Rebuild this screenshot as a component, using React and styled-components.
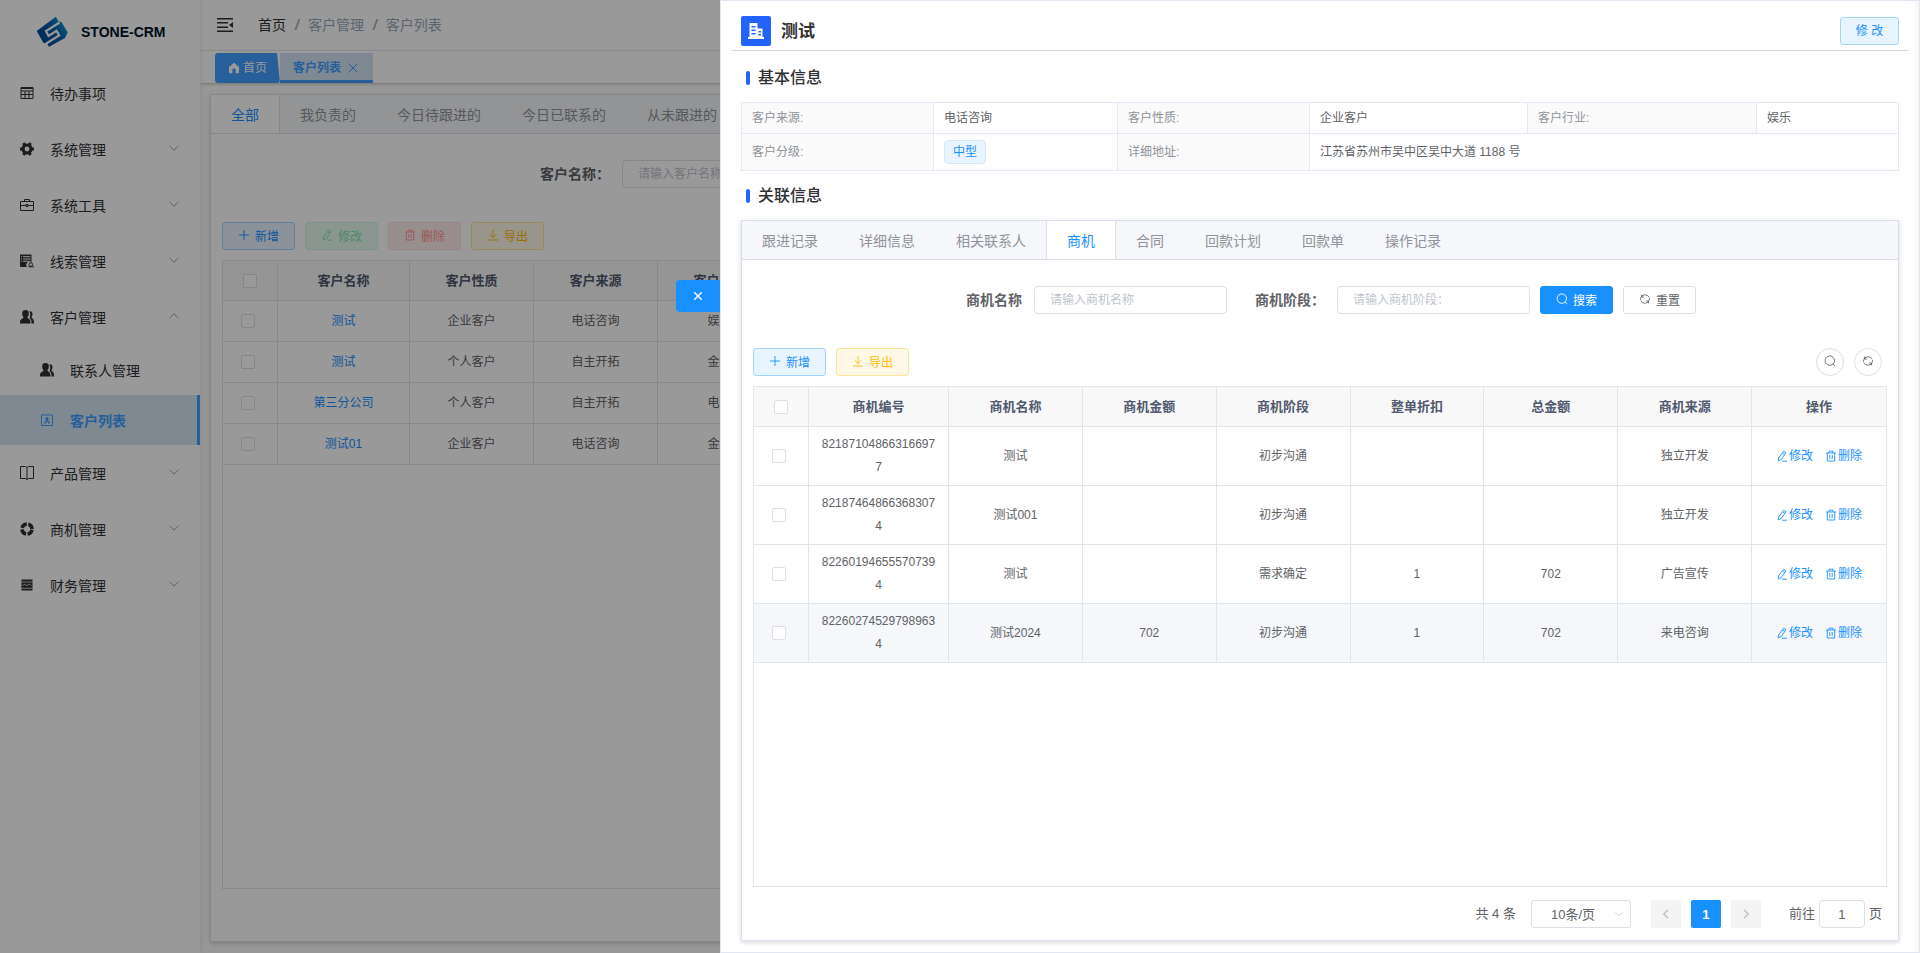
import styled, { createGlobalStyle } from "styled-components";

const GlobalStyle = createGlobalStyle`
  * {
    box-sizing: border-box;
  }
  body {
    margin: 0;
    background: #fff;
    color: #303133;
    font-family: "Liberation Sans", "Noto Sans CJK SC", sans-serif;
    font-size: 14px;
    line-height: 20px;
  }
  button, input, select {
    font-family: inherit;
    margin: 0;
  }
  a {
    color: inherit;
    text-decoration: none;
  }
`;

/* ---------- icons ---------- */

const Svg = styled.svg`
  display: block;
  flex: none;
  width: ${(p) => p.$size || 12}px;
  height: ${(p) => p.$size || 12}px;
  fill: none;
  stroke: currentColor;
  stroke-width: ${(p) => p.$stroke || 0.9};
`;

const PlusIcon = () => (
  <Svg viewBox="0 0 12 12">
    <path d="M6 1v10M1 6h10" />
  </Svg>
);

const EditIcon = () => (
  <Svg viewBox="0 0 12 12">
    <path d="M7.6 1.2 10 2.7 5.2 9.6 2.2 10.9 2.5 8zM6.5 2.8 8.9 4.4M6 11.2h5" />
  </Svg>
);

const TrashIcon = () => (
  <Svg viewBox="0 0 12 12">
    <path d="M1 3h10M4 3V1.2h4V3M2.3 3v8h7.4V3M4.8 5v4M7.2 5v4" />
  </Svg>
);

const DownloadIcon = () => (
  <Svg viewBox="0 0 12 12">
    <path d="M6 1v7.5M2.8 5.5 6 8.6l3.2-3.1M1 11h10" />
  </Svg>
);

const SearchIcon = () => (
  <Svg viewBox="0 0 12 12">
    <circle cx="5.8" cy="5.6" r="4.7" />
    <path d="m9.2 9 2 2.2" />
  </Svg>
);

const RefreshIcon = () => (
  <Svg viewBox="0 0 12 12">
    <path d="M1.6 7.2V5.4A4 4 0 0 1 5.2 1.900h1.500A4 4 0 0 1 10 4M10.400 4.800v1.800a4 4 0 0 1-3.600 3.500H5.300A4 4 0 0 1 2 8M2.300 1.700l.5 2.300h2M9.700 10.300 9.200 8h-2" />
  </Svg>
);

const CloseIcon = ({ size = 12, stroke = 1 }) => (
  <Svg viewBox="0 0 12 12" $size={size} $stroke={stroke}>
    <path d="m1.5 1.5 9 9M10.5 1.5l-9 9" />
  </Svg>
);

const Chevron = ({ up, size = 12 }) => (
  <Svg viewBox="0 0 12 12" $size={size}>
    <path d={up ? "M1.5 8.2 6 3.8l4.5 4.4" : "M1.5 3.8 6 8.2l4.5-4.4"} />
  </Svg>
);

const SideChevron = ({ right }) => (
  <Svg viewBox="0 0 12 12" $stroke={1.6}>
    <path d={right ? "M4 1.8 8.2 6 4 10.2" : "M8 1.8 3.8 6 8 10.2"} />
  </Svg>
);

const HomeIcon = () => (
  <Svg viewBox="0 0 12 12">
    <path
      fill="currentColor"
      stroke="none"
      d="M6 .8 11 5v6.2H7.6V7.8a1.6 1.6 0 0 0-3.2 0v3.400H1V5z"
    />
  </Svg>
);

const FoldIcon = () => (
  <Svg viewBox="0 0 16 16" $size={16}>
    <path strokeWidth="1.4" d="M0 1.7h16M0 5.7h11M0 10.300h11M0 14.300h16" />
    <path fill="currentColor" stroke="none" d="M16 5v6l-4-3z" />
  </Svg>
);

const BuildingIcon = () => (
  <Svg viewBox="0 0 16 16" $size={16}>
    <path
      fill="currentColor"
      stroke="none"
      fillRule="evenodd"
      d="M1.5 0h8v5.5h5V14H16v2H0v-2h1.5zM3.5 3v1.5h4V3zm0 3.5V8h4V6.5zm0 3.5v1.5h4V10zm7-2v1.5H13V8zm0 3v1.5H13V11z"
    />
  </Svg>
);

const Logo = () => (
  <Svg viewBox="0 0 32 32" $size={32}>
    <defs>
      <linearGradient id="logoFill" x1="0" y1="1" x2="1" y2="0.2">
        <stop offset="0" stopColor="#003c90" />
        <stop offset="0.6" stopColor="#0a5cab" />
        <stop offset="1" stopColor="#12a0d6" />
      </linearGradient>
    </defs>
    <path
      fill="url(#logoFill)"
      stroke="none"
      d="M.7 15 19.800.7 22.500 5.500 25.500 6 31.700 16.500 29 22 13 30.800 10.800 27.200 7.500 27z"
    />
    <path stroke="#fff" strokeWidth="2.200" d="m23.500 6.500-13.500 8.700 2.600 4.800 7.900-5.200 2.700 4.700-13.700 8.500" />
  </Svg>
);

const menuPaths = {
  table: <path d="M1 1.500h12v11H1zM1 2.500h12M1 5h12M1 8.500h12M5 5v7.500M9 5v7.500" />,
  gear: (
    <>
      <circle cx="7" cy="7" r="4" strokeWidth="3.200" />
      <path
        strokeWidth="3"
        d="M3.500.9 4.800 3.200M10.500.9 9.200 3.200M0 7h2.500M11.500 7H14M3.500 13.100l1.300-2.300M10.500 13.100l-1.300-2.300"
      />
    </>
  ),
  briefcase: <path d="M.5 3.500h13v9H.5zM4.500 3.500v-2h5v2M.5 7.500H6M8 7.500h5.500M6 6.500h2v2H6z" />,
  server: (
    <>
      <path fill="currentColor" stroke="none" d="M0 .5h11.500v8A3.200 3.200 0 0 0 7 13H1a1 1 0 0 1-1-1z" />
      <path stroke="#fff" d="M3 2.700h7.500M3 5h7.500M3 7.300h7.500M1 2.700h1M1 5h1M1 7.300h1" />
      <circle cx="10.800" cy="10.600" r="1.800" />
      <path d="M8.500 12.800H14" />
    </>
  ),
  users: (
    <>
      <path
        fill="currentColor"
        stroke="none"
        d="M5.500 0a3.300 3.300 0 0 1 3.300 3.500c0 1.600-.7 2.900-1.400 3.600 0 .9.500 1.300 1.500 1.800 1.300.6 1.600 1.800 1.600 4.600H0c0-2.800.3-4 1.800-4.600 1.200-.5 1.700-.9 1.700-1.800-.8-.7-1.300-2-1.300-3.600A3.300 3.300 0 0 1 5.500 0z"
      />
      <path
        fill="currentColor"
        stroke="none"
        d="M9.500 1.200c1.800-.3 3 1 3 2.900 0 1.400-.5 2.400-1 3 0 .8.400 1.200 1.200 1.700 1 .6 1.300 1.700 1.300 4.700h-2.500c0-3-.4-4.400-2-5.200.7-1.200 1.300-3.800 0-7.100z"
      />
    </>
  ),
  badge: (
    <>
      <path d="M3 2H1.500v10.500h11V2H11M5 2h1M8 2h1M4 .8v2M7 .8v2M10 .8v2" />
      <circle cx="7" cy="5.800" r="1.200" fill="currentColor" />
      <path strokeWidth="1.400" d="M4.500 10.500 7 7.200l2.500 3.300" />
    </>
  ),
  book: (
    <>
      <path d="M5.500.5h-5v12h5M8.500.5h5v12h-5M5.500.5 7 1.500 8.500.5M5.500 12.500l1.500 1 1.500-1" />
      <path strokeOpacity="0.6" strokeWidth="1.600" d="M7 1.500v12" />
    </>
  ),
  ring: (
    <circle
      cx="7"
      cy="7"
      r="5"
      strokeWidth="3.600"
      strokeDasharray="6.250 1.600"
      strokeDashoffset="-0.800"
    />
  ),
  chart: (
    <>
      <path fill="currentColor" stroke="none" d="M1.500 1.500h11v11h-11z" />
      <path stroke="#fff" strokeWidth="0.700" d="M1.500 4h11M1.500 10.300h11M2.500 7.500 5 6l2 2 2-2 2.500 1.500" />
    </>
  ),
};

const MenuIcon = ({ name }) => (
  <Svg viewBox="0 0 14 14" $size={14} $stroke={1}>
    {menuPaths[name]}
  </Svg>
);

/* ---------- sidebar ---------- */

const Shell = styled.div`
  display: flex;
  height: 100vh;
  min-height: 700px;
  overflow: hidden;
`;

const Sidebar = styled.aside`
  flex: none;
  width: 200px;
  background: #fff;
  box-shadow: 0 0 6px rgba(60, 80, 140, 0.14);
  z-index: 1;
`;

const Brand = styled.h1`
  display: flex;
  align-items: center;
  gap: 13px;
  height: 65px;
  margin: 0;
  padding: 0 0 2px 36px;
  color: #001529;
  font-size: 14px;
  font-weight: 700;
`;

const MenuLink = styled.a`
  display: flex;
  align-items: center;
  height: ${(p) => (p.$sub ? 50 : 56)}px;
  padding: 0 17px 0 ${(p) => (p.$sub ? 40 : 20)}px;
  gap: 16px;
  color: ${(p) => (p.$active ? "#409eff" : "#303133")};
  font-weight: ${(p) => (p.$active ? 700 : 400)};
  background: ${(p) => (p.$active ? "#d3e4f3" : "transparent")};
  border-right: 3px solid ${(p) => (p.$active ? "#409eff" : "transparent")};

  > span {
    flex: 1;
    padding-top: 2px;
  }
  > span + svg {
    color: #909399;
    margin-bottom: 2px;
  }
`;

const menu = [
  { icon: "table", label: "待办事项" },
  { icon: "gear", label: "系统管理", arrow: "down" },
  { icon: "briefcase", label: "系统工具", arrow: "down" },
  { icon: "server", label: "线索管理", arrow: "down" },
  { icon: "users", label: "客户管理", arrow: "up" },
  { icon: "users", label: "联系人管理", sub: true },
  { icon: "badge", label: "客户列表", sub: true, active: true },
  { icon: "book", label: "产品管理", arrow: "down" },
  { icon: "ring", label: "商机管理", arrow: "down" },
  { icon: "chart", label: "财务管理", arrow: "down" },
];

/* ---------- top bars ---------- */

const Main = styled.main`
  display: flex;
  flex: 1;
  flex-direction: column;
  min-width: 0;
  background: #fcfcfd;
`;

const Navbar = styled.header`
  display: flex;
  align-items: center;
  flex: none;
  gap: 25px;
  height: 51px;
  padding-left: 17px;
  background: #fff;
  border-bottom: 1px solid #f0f0f4;
`;

const Breadcrumb = styled.nav`
  display: flex;
  color: #97a8be;

  a {
    color: #303133;
  }
  i {
    margin: 0 9px;
    color: #a8abb2;
    font-weight: 700;
  }
`;

const TagBar = styled.div`
  display: flex;
  align-items: flex-end;
  flex: none;
  height: 32px;
  padding-left: 15px;
  background: #fff;
  box-shadow: 0 1px 3px rgba(0, 0, 0, 0.24);
`;

const TagLink = styled.a`
  display: flex;
  align-items: center;
  gap: 3px;
  height: 30px;
  padding: 0 13px;
  font-size: 12px;
  color: #fff;
  background: #409eff;
  border-radius: 3px;
  clip-path: polygon(0 0, calc(100% - 3px) 0, 100% 100%, 0 100%);
`;

const ActiveTag = styled.div`
  display: flex;
  align-items: center;
  gap: 6px;
  height: 30px;
  padding: 2px 14px 0 13px;
  font-size: 12px;
  font-weight: 700;
  color: #409eff;
  background: #d3e4f6;
  border-bottom: 3px solid #409eff;
`;

const PlainButton = styled.button`
  display: flex;
  padding: 0;
  color: inherit;
  background: none;
  border: 0;
`;

/* ---------- shared panel ---------- */

const Panel = styled.section`
  display: flex;
  flex: 1;
  flex-direction: column;
  min-height: 0;
  background: #fff;
  border: 1px solid #d9dfec;
  box-shadow: 0 2px 4px rgba(0, 0, 0, 0.12), 0 0 6px rgba(0, 0, 0, 0.04);
`;

const PagePanel = styled(Panel)`
  margin: 11px 10px;
`;

const TabList = styled.div`
  display: flex;
  flex: none;
  height: 39px;
  overflow: hidden;
  background: #f5f7fa;
  border-bottom: 1px solid #dcdfe6;
`;

const Tab = styled.button`
  flex: none;
  height: 39px;
  margin-left: -1px;
  padding: 0 20px 2px;
  font-size: 14px;
  color: ${(p) => (p.$active ? "#1890ff" : "#909399")};
  background: ${(p) => (p.$active ? "#fff" : "transparent")};
  border: solid ${(p) => (p.$active ? "#dcdfe6" : "transparent")};
  border-width: 0 1px;
`;

const PanelBody = styled.div`
  display: flex;
  flex: 1;
  flex-direction: column;
  min-height: 0;
  padding: 26px 11px 12px;
`;

const SearchForm = styled.form`
  display: flex;
  flex: none;
  align-items: center;
  justify-content: ${(p) => (p.$start ? "flex-start" : "center")};
  margin-bottom: 34px;
  padding-left: ${(p) => (p.$start ? 318 : 22)}px;
`;

const Field = styled.label`
  display: flex;
  align-items: center;
  gap: 12px;
  margin-right: ${(p) => p.$gap || 0}px;
  color: #606266;
  font-weight: 700;
`;

const TextInput = styled.input`
  width: 193px;
  height: 28px;
  padding: 0 15px;
  color: #606266;
  font-size: 12px;
  background: #fff;
  border: 1px solid #dcdfe6;
  border-radius: 4px;
  outline: 0;

  &::placeholder {
    color: #c0c4cc;
  }
`;

const FormButtons = styled.div`
  display: flex;
  gap: 10px;
`;

const tones = {
  primary: ["#fff", "#1890ff", "#1890ff"],
  default: ["#606266", "#fff", "#dcdfe6"],
  blue: ["#1890ff", "#e8f4ff", "#a3d3ff"],
  green: ["#7be5ac", "#e7faf0", "#d0f5e0"],
  red: ["#ff9292", "#ffeded", "#ffdbdb"],
  yellow: ["#ffba00", "#fff8e6", "#ffe399"],
};

const Button = styled.button`
  display: inline-flex;
  align-items: center;
  justify-content: center;
  gap: 5px;
  width: ${(p) => p.$width || 73}px;
  height: 28px;
  padding: 0 0 2px;
  font-size: 12px;
  color: ${(p) => tones[p.$tone][0]};
  background: ${(p) => tones[p.$tone][1]};
  border: 1px solid ${(p) => tones[p.$tone][2]};
  border-radius: ${(p) => (p.$round ? 14 : 3)}px;
`;

const Toolbar = styled.div`
  display: flex;
  flex: none;
  gap: 10px;
  margin-bottom: 10px;
`;

const Spacer = styled.div`
  flex: 1;
`;

const RoundTools = styled.div`
  display: flex;
  gap: 10px;
  padding-right: 5px;
`;

const TableBox = styled.div`
  flex: 1;
  min-height: 0;
  overflow: hidden;
  margin-bottom: ${(p) => p.$bottom || 0}px;
  border: 1px solid #dfe6ec;
`;

const Table = styled.table`
  width: ${(p) => (p.$fill ? "100%" : "559px")};
  table-layout: fixed;
  border-collapse: separate;
  border-spacing: 0;

  th,
  td {
    padding: 0 10px;
    text-align: center;
    border: solid #dfe6ec;
    border-width: 0 1px 1px 0;
  }
  tr > :last-child {
    border-right-width: ${(p) => (p.$fill ? 0 : 1)}px;
  }
  th {
    height: 40px;
    color: #515a6e;
    background: #f8f8f9;
    font-size: 13px;
    font-weight: 700;
  }
  td {
    height: ${(p) => p.$row}px;
    color: #606266;
    font-size: 12px;
    line-height: 23px;
    word-break: break-all;
  }
  td:first-child {
    padding: 0 14px 0 10px;
  }
`;

const Row = styled.tr`
  background: ${(p) => (p.$hover ? "#f5f7fa" : "#fff")};
`;

const Check = styled.input.attrs({ type: "checkbox" })`
  display: block;
  width: 14px;
  height: 14px;
  margin: 0 auto;
  appearance: none;
  background: #fff;
  border: 1px solid #dcdfe6;
  border-radius: 2px;
`;

const NameLink = styled.a`
  color: #1890ff;
`;

const RowActions = styled.div`
  display: flex;
  justify-content: center;
  gap: 12px;
  color: #1890ff;
`;

const TextButton = styled(PlainButton)`
  align-items: center;
  gap: 1px;
  font-size: 12px;
  line-height: 20px;
`;

/* ---------- drawer ---------- */

const Mask = styled.div`
  position: fixed;
  inset: 0;
  z-index: 2;
  background: rgba(0, 0, 0, 0.4);
`;

const Drawer = styled.aside`
  position: fixed;
  top: 0;
  right: 0;
  bottom: 0;
  z-index: 3;
  display: flex;
  flex-direction: column;
  width: 62.5%;
  padding: 0 10px 11px;
  background: #fff;
  border: 1px solid #e2e6f3;
  box-shadow: inset -8px 0 8px -6px rgba(0, 0, 0, 0.05);
`;

const DrawerClose = styled.button`
  position: absolute;
  top: 279px;
  right: 100%;
  display: flex;
  align-items: center;
  justify-content: center;
  width: 44px;
  height: 32px;
  margin-right: 1px;
  padding: 0;
  color: #fff;
  background: #1890ff;
  border: 0;
  border-radius: 4px 0 0 4px;
`;

const DrawerHead = styled.header`
  display: flex;
  align-items: center;
  flex: none;
  gap: 10px;
  height: 50px;
  padding: 10px 10px 0;
  margin-bottom: 2px;
  border-bottom: 1px solid #d0d9e8;
`;

const HeadIcon = styled.span`
  display: flex;
  align-items: center;
  justify-content: center;
  width: 30px;
  height: 30px;
  color: #fff;
  background: #2362fb;
  border-radius: 2px;
`;

const HeadTitle = styled.h2`
  flex: 1;
  margin: 0;
  padding-top: 2px;
  color: #333;
  font-size: 17px;
  line-height: 24px;
`;

const DrawerBody = styled.div`
  display: flex;
  flex: 1;
  flex-direction: column;
  min-height: 0;
  padding: 0 10px;
`;

const SectionTitle = styled.h3`
  display: flex;
  align-items: center;
  flex: none;
  gap: 8px;
  margin: 0;
  padding: 13px 5px 12px;
  color: #303133;
  font-size: 16px;
  font-weight: 500;
  line-height: 24px;

  &::before {
    content: "";
    width: 4px;
    height: 14px;
    background: #2362fb;
    border-radius: 2px;
  }
`;

const Info = styled.table`
  flex: none;
  width: 100%;
  table-layout: fixed;
  border-collapse: collapse;
  font-size: 12px;

  th,
  td {
    height: 31px;
    padding: 0 10px;
    text-align: left;
    color: #606266;
    border: 1px solid #e6e8f5;
  }
  th {
    color: #909399;
    font-weight: 400;
    background: #fafafa;
  }
  tr:last-child > * {
    height: 37px;
  }
`;

const Level = styled.span`
  display: inline-block;
  padding: 0 8px;
  color: #1890ff;
  line-height: 22px;
  background: #e8f4ff;
  border: 1px solid #d1e9ff;
  border-radius: 4px;
`;

const Pager = styled.div`
  display: flex;
  align-items: center;
  justify-content: flex-end;
  flex: none;
  margin-top: 13px;
  padding-right: 5px;
  color: #606266;
  font-size: 13px;
`;

const SizeSelect = styled.div`
  display: grid;
  align-items: center;
  width: 100px;
  margin: 0 20px 0 15px;

  > * {
    grid-area: 1 / 1;
  }
  select {
    width: 100%;
    height: 28px;
    padding: 0 25px 0 19px;
    color: #606266;
    font-size: 13px;
    background: #fff;
    border: 1px solid #dcdfe6;
    border-radius: 3px;
    appearance: none;
  }
  svg {
    justify-self: end;
    margin-right: 7px;
    color: #c0c4cc;
    pointer-events: none;
  }
`;

const PageButtons = styled.div`
  display: flex;
  gap: 10px;
  margin-right: 28px;
`;

const PageButton = styled.button`
  display: flex;
  align-items: center;
  justify-content: center;
  width: 30px;
  height: 28px;
  padding: 0;
  font-size: 13px;
  font-weight: 700;
  color: ${(p) => (p.$active ? "#fff" : "#c0c4cc")};
  background: ${(p) => (p.$active ? "#1890ff" : "#f4f4f5")};
  border: 0;
  border-radius: 2px;
`;

const Jump = styled.label`
  display: flex;
  align-items: center;
  gap: 4px;

  input {
    width: 46px;
    height: 28px;
    padding: 0 3px;
    color: #606266;
    font-size: 13px;
    text-align: center;
    border: 1px solid #dcdfe6;
    border-radius: 4px;
  }
`;

const pageTabs = ["全部", "我负责的", "今日待跟进的", "今日已联系的", "从未跟进的"];

const customers = [
  ["测试", "企业客户", "电话咨询", "娱乐"],
  ["测试", "个人客户", "自主开拓", "金融"],
  ["第三分公司", "个人客户", "自主开拓", "电商"],
  ["测试01", "企业客户", "电话咨询", "金融"],
];

const drawerTabs = ["跟进记录", "详细信息", "相关联系人", "商机", "合同", "回款计划", "回款单", "操作记录"];

const chanceHeads = ["商机编号", "商机名称", "商机金额", "商机阶段", "整单折扣", "总金额", "商机来源", "操作"];

const chances = [
  ["821871048663166977", "测试", "", "初步沟通", "", "", "独立开发"],
  ["821874648663683074", "测试001", "", "初步沟通", "", "", "独立开发"],
  ["822601946555707394", "测试", "", "需求确定", "1", "702", "广告宣传"],
  ["822602745297989634", "测试2024", "702", "初步沟通", "1", "702", "来电咨询"],
];

const Tabs = ({ items, active }) => (
  <TabList>
    {items.map((t) => (
      <Tab key={t} $active={t === active}>
        {t}
      </Tab>
    ))}
  </TabList>
);

const CustomerPage = () => (
  <PagePanel>
    <Tabs items={pageTabs} active="全部" />
    <PanelBody>
      <SearchForm $start>
        <Field>
          客户名称：
          <TextInput placeholder="请输入客户名称" />
        </Field>
      </SearchForm>
      <Toolbar>
        <Button $tone="blue">
          <PlusIcon />
          新增
        </Button>
        <Button $tone="green" disabled>
          <EditIcon />
          修改
        </Button>
        <Button $tone="red" disabled>
          <TrashIcon />
          删除
        </Button>
        <Button $tone="yellow">
          <DownloadIcon />
          导出
        </Button>
      </Toolbar>
      <TableBox $bottom={40}>
        <Table $row={41}>
          <colgroup>
            <col width="55" />
            <col width="132" />
            <col width="124" />
            <col width="124" />
            <col width="124" />
          </colgroup>
          <thead>
            <tr>
              <th>
                <Check aria-label="全选" />
              </th>
              <th>客户名称</th>
              <th>客户性质</th>
              <th>客户来源</th>
              <th>客户行业</th>
            </tr>
          </thead>
          <tbody>
            {customers.map(([name, ...rest], i) => (
              <Row key={i}>
                <td>
                  <Check aria-label={name} />
                </td>
                <td>
                  <NameLink href="#">{name}</NameLink>
                </td>
                {rest.map((v, j) => (
                  <td key={j}>{v}</td>
                ))}
              </Row>
            ))}
          </tbody>
        </Table>
      </TableBox>
    </PanelBody>
  </PagePanel>
);

const ChancePanel = () => (
  <Panel>
    <Tabs items={drawerTabs} active="商机" />
    <PanelBody>
      <SearchForm>
        <Field $gap={28}>
          商机名称
          <TextInput placeholder="请输入商机名称" />
        </Field>
        <Field $gap={10}>
          商机阶段：
          <TextInput placeholder="请输入商机阶段：" />
        </Field>
        <FormButtons>
          <Button type="button" $tone="primary">
            <SearchIcon />
            搜索
          </Button>
          <Button type="button" $tone="default">
            <RefreshIcon />
            重置
          </Button>
        </FormButtons>
      </SearchForm>
      <Toolbar>
        <Button $tone="blue">
          <PlusIcon />
          新增
        </Button>
        <Button $tone="yellow">
          <DownloadIcon />
          导出
        </Button>
        <Spacer />
        <RoundTools>
          <Button $tone="default" $width={28} $round aria-label="搜索">
            <SearchIcon />
          </Button>
          <Button $tone="default" $width={28} $round aria-label="刷新">
            <RefreshIcon />
          </Button>
        </RoundTools>
      </Toolbar>
      <TableBox>
        <Table $fill $row={59}>
          <colgroup>
            <col width="55" />
            <col width="140" />
            <col span="7" />
          </colgroup>
          <thead>
            <tr>
              <th>
                <Check aria-label="全选" />
              </th>
              {chanceHeads.map((h) => (
                <th key={h}>{h}</th>
              ))}
            </tr>
          </thead>
          <tbody>
            {chances.map((cells, i) => (
              <Row key={cells[0]} $hover={i === 3}>
                <td>
                  <Check aria-label={cells[0]} />
                </td>
                {cells.map((v, j) => (
                  <td key={j}>{v}</td>
                ))}
                <td>
                  <RowActions>
                    <TextButton>
                      <EditIcon />
                      修改
                    </TextButton>
                    <TextButton>
                      <TrashIcon />
                      删除
                    </TextButton>
                  </RowActions>
                </td>
              </Row>
            ))}
          </tbody>
        </Table>
      </TableBox>
      <Pager>
        共 4 条
        <SizeSelect>
          <select aria-label="每页条数" defaultValue="10">
            <option value="10">10条/页</option>
          </select>
          <Chevron size={10} />
        </SizeSelect>
        <PageButtons>
          <PageButton aria-label="上一页" disabled>
            <SideChevron />
          </PageButton>
          <PageButton $active>1</PageButton>
          <PageButton aria-label="下一页" disabled>
            <SideChevron right />
          </PageButton>
        </PageButtons>
        <Jump>
          前往
          <input defaultValue="1" />页
        </Jump>
      </Pager>
    </PanelBody>
  </Panel>
);

const App = () => {
  return (
    <>
      <GlobalStyle />
      <Shell>
        <Sidebar>
          <Brand>
            <Logo />
            STONE-CRM
          </Brand>
          <nav>
            {menu.map((m) => (
              <MenuLink key={m.label} href="#" $sub={m.sub} $active={m.active}>
                <MenuIcon name={m.icon} />
                <span>{m.label}</span>
                {m.arrow && <Chevron up={m.arrow === "up"} />}
              </MenuLink>
            ))}
          </nav>
        </Sidebar>
        <Main>
          <Navbar>
            <PlainButton aria-label="收起菜单">
              <FoldIcon />
            </PlainButton>
            <Breadcrumb>
              <a href="#">首页</a>
              <i>/</i>
              <span>客户管理</span>
              <i>/</i>
              <span>客户列表</span>
            </Breadcrumb>
          </Navbar>
          <TagBar>
            <TagLink href="#">
              <HomeIcon />
              首页
            </TagLink>
            <ActiveTag>
              客户列表
              <PlainButton aria-label="关闭">
                <CloseIcon />
              </PlainButton>
            </ActiveTag>
          </TagBar>
          <CustomerPage />
        </Main>
      </Shell>
      <Mask />
      <Drawer>
        <DrawerClose aria-label="关闭">
          <CloseIcon size={10} stroke={1.6} />
        </DrawerClose>
        <DrawerHead>
          <HeadIcon>
            <BuildingIcon />
          </HeadIcon>
          <HeadTitle>测试</HeadTitle>
          <Button $tone="blue" $width={59}>
            修 改
          </Button>
        </DrawerHead>
        <DrawerBody>
          <SectionTitle>基本信息</SectionTitle>
          <Info>
            <colgroup>
              <col width="192" />
              <col width="184" />
              <col width="192" />
              <col width="218" />
              <col width="229" />
              <col />
            </colgroup>
            <tbody>
              <tr>
                <th>客户来源:</th>
                <td>电话咨询</td>
                <th>客户性质:</th>
                <td>企业客户</td>
                <th>客户行业:</th>
                <td>娱乐</td>
              </tr>
              <tr>
                <th>客户分级:</th>
                <td>
                  <Level>中型</Level>
                </td>
                <th>详细地址:</th>
                <td colSpan={3}>江苏省苏州市吴中区吴中大道 1188 号</td>
              </tr>
            </tbody>
          </Info>
          <SectionTitle>关联信息</SectionTitle>
          <ChancePanel />
        </DrawerBody>
      </Drawer>
    </>
  );
};

export default App;
